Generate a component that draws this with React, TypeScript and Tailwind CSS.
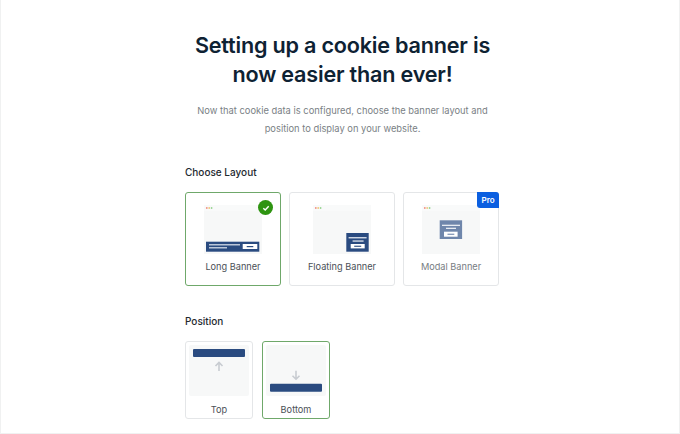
const sans = 'font-["Inter","Noto_Sans",sans-serif]';

function Dots() {
  return (
    <>
      <circle cx="2.8" cy="3" r="0.9" fill="#f08f84" />
      <circle cx="5.2" cy="3" r="0.9" fill="#f0c878" />
      <circle cx="7.6" cy="3" r="0.9" fill="#98d492" />
    </>
  );
}

function PreviewFrame({ children }: { children: React.ReactNode }) {
  return (
    <svg width="58" height="49" viewBox="0 0 58 49">
      <rect width="58" height="49" fill="#f7f8f8" />
      <rect width="58" height="6" fill="#f9fafa" />
      <Dots />
      {children}
    </svg>
  );
}

function LongPreview() {
  return (
    <PreviewFrame>
      <rect x="2" y="36.7" width="53.3" height="10" fill="#2a4b80" />
      <rect x="5" y="39.2" width="31" height="1.2" fill="#dfe5ee" />
      <rect x="5" y="42.2" width="18" height="1.2" fill="#dfe5ee" />
      <rect x="38.7" y="39" width="14.6" height="5" fill="#ffffff" />
      <rect x="42.7" y="41" width="6.6" height="1.2" fill="#2a4b80" />
    </PreviewFrame>
  );
}

function FloatingPreview() {
  return (
    <PreviewFrame>
      <rect x="33.3" y="28" width="22.4" height="18.7" fill="#2a4b80" />
      <rect x="35.6" y="32.1" width="18" height="1.3" fill="#dfe5ee" />
      <rect x="39.6" y="35.4" width="11" height="1.3" fill="#dfe5ee" />
      <rect x="37.7" y="39" width="14" height="4.4" fill="#ffffff" />
      <rect x="41.2" y="40.7" width="7" height="1.1" fill="#2a4b80" />
    </PreviewFrame>
  );
}

function ModalPreview() {
  return (
    <PreviewFrame>
      <rect x="17.7" y="15.3" width="22.4" height="18.7" fill="#6f86ab" />
      <rect x="20" y="19.7" width="18" height="1.3" fill="#e6ebf2" />
      <rect x="24" y="22.7" width="10" height="1.3" fill="#e6ebf2" />
      <rect x="22" y="26.7" width="13.6" height="5" fill="#ffffff" />
      <rect x="25.5" y="28.7" width="6.8" height="1.1" fill="#6f86ab" />
    </PreviewFrame>
  );
}

function LayoutCard({
  label,
  selected,
  pro,
  wide,
  children,
}: {
  label: string;
  selected?: boolean;
  pro?: boolean;
  wide?: boolean;
  children: React.ReactNode;
}) {
  return (
    <div
      className={`relative h-[94px] flex flex-col items-center pt-[12px] rounded-[3px] border ${
        wide ? 'w-[106px]' : 'w-[96px]'
      } ${selected ? 'border-[#6fa86a]' : 'border-[#e4e6e8]'}`}
    >
      {children}
      <span className={`mt-[6px] text-[9.2px] leading-[14px] ${pro ? 'text-[#777d83]' : 'text-[#4b5157]'}`}>
        {label}
      </span>
      {selected && (
        <span className="absolute top-[7px] right-[7px] w-[15px] h-[15px] rounded-full bg-[#2e9411] flex items-center justify-center">
          <svg width="8" height="8" viewBox="0 0 8 8" fill="none">
            <path d="M1.3 4.2 L3.2 6 L6.7 2.2" stroke="#fff" strokeWidth="1.4" />
          </svg>
        </span>
      )}
      {pro && (
        <span className="absolute top-[-1px] right-[-1px] w-[22px] h-[16px] bg-[#0b5fe0] rounded-tr-[3px] rounded-bl-[3px] text-white text-[8px] leading-[16px] font-semibold text-center">
          Pro
        </span>
      )}
    </div>
  );
}

function PositionCard({ label, top, selected }: { label: string; top?: boolean; selected?: boolean }) {
  return (
    <div
      className={`w-[68px] h-[78px] flex flex-col items-center pt-[3px] rounded-[3px] border ${
        selected ? 'border-[#6fa86a]' : 'border-[#e4e6e8]'
      }`}
    >
      <svg width="60" height="51" viewBox="0 0 60 51">
        <rect width="60" height="51" rx="2" fill="#f7f8f8" />
        {top ? (
          <>
            <rect x="4" y="4" width="52" height="8" rx="1" fill="#2a4b80" />
            <path d="M30 26 V17.5 M26.5 21 L30 17.5 L33.5 21" stroke="#c8ccd1" strokeWidth="1.6" fill="none" />
          </>
        ) : (
          <>
            <rect x="4" y="38.7" width="52" height="8" rx="1" fill="#2a4b80" />
            <path d="M30 25.7 V34.2 M26.5 30.7 L30 34.2 L33.5 30.7" stroke="#c8ccd1" strokeWidth="1.6" fill="none" />
          </>
        )}
      </svg>
      <span className="mt-[7px] text-[9.2px] leading-[14px] text-[#4b5157]">{label}</span>
    </div>
  );
}

export default function App() {
  return (
    <div
      className={`w-[680px] h-[434px] overflow-hidden bg-white flex flex-col items-center pl-[5px] border-x border-b border-[#f0f1f1] ${sans}`}
    >
      <div className="w-[315px] flex flex-col">
        <h1 className="mt-[31px] text-center text-[21.6px] leading-[29px] font-semibold tracking-[-0.2px] text-[#0e2233]">
          Setting up a cookie banner is
          <br />
          now easier than ever!
        </h1>
        <p className="mt-[13px] text-center text-[9.35px] leading-[17.5px] text-[#7a7f85]">
          Now that cookie data is configured, choose the banner layout and
          <br />
          position to display on your website.
        </p>
        <h2 className="mt-[28px] text-[10px] leading-[14px] font-medium text-[#23292f]">Choose Layout</h2>
        <div className="mt-[13px] flex gap-[8px]">
          <LayoutCard label="Long Banner" selected>
            <LongPreview />
          </LayoutCard>
          <LayoutCard label="Floating Banner" wide>
            <FloatingPreview />
          </LayoutCard>
          <LayoutCard label="Modal Banner" pro>
            <ModalPreview />
          </LayoutCard>
        </div>
        <h2 className="mt-[28px] text-[10px] leading-[14px] font-medium text-[#23292f]">Position</h2>
        <div className="mt-[13px] flex gap-[9px]">
          <PositionCard label="Top" top />
          <PositionCard label="Bottom" selected />
        </div>
      </div>
    </div>
  );
}
